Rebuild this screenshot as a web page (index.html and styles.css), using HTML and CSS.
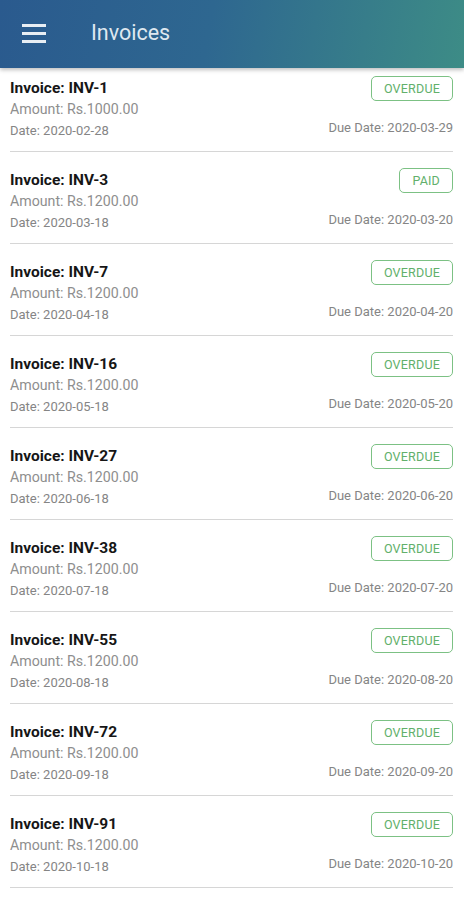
FILE: index.html
```html
<!DOCTYPE html>
<html lang="en">
<head>
    <meta charset="UTF-8">
    <meta name="viewport" content="width=device-width, initial-scale=1.0">
    <title>Invoices</title>
    <link rel="stylesheet" href="styles.css">
</head>
<body>

<header class="app-bar">
    <div class="menu-icon">
        <span></span>
        <span></span>
        <span></span>
    </div>
    <h1>Invoices</h1>
</header>

<ul class="invoice-list">
    <li class="invoice">
        <div class="info">
            <div class="number">Invoice: INV-1</div>
            <div class="amount">Amount: Rs.1000.00</div>
            <div class="date">Date: 2020-02-28</div>
        </div>
        <div class="side">
            <span class="status">OVERDUE</span>
            <div class="due">Due Date: 2020-03-29</div>
        </div>
    </li>
    <li class="invoice">
        <div class="info">
            <div class="number">Invoice: INV-3</div>
            <div class="amount">Amount: Rs.1200.00</div>
            <div class="date">Date: 2020-03-18</div>
        </div>
        <div class="side">
            <span class="status">PAID</span>
            <div class="due">Due Date: 2020-03-20</div>
        </div>
    </li>
    <li class="invoice">
        <div class="info">
            <div class="number">Invoice: INV-7</div>
            <div class="amount">Amount: Rs.1200.00</div>
            <div class="date">Date: 2020-04-18</div>
        </div>
        <div class="side">
            <span class="status">OVERDUE</span>
            <div class="due">Due Date: 2020-04-20</div>
        </div>
    </li>
    <li class="invoice">
        <div class="info">
            <div class="number">Invoice: INV-16</div>
            <div class="amount">Amount: Rs.1200.00</div>
            <div class="date">Date: 2020-05-18</div>
        </div>
        <div class="side">
            <span class="status">OVERDUE</span>
            <div class="due">Due Date: 2020-05-20</div>
        </div>
    </li>
    <li class="invoice">
        <div class="info">
            <div class="number">Invoice: INV-27</div>
            <div class="amount">Amount: Rs.1200.00</div>
            <div class="date">Date: 2020-06-18</div>
        </div>
        <div class="side">
            <span class="status">OVERDUE</span>
            <div class="due">Due Date: 2020-06-20</div>
        </div>
    </li>
    <li class="invoice">
        <div class="info">
            <div class="number">Invoice: INV-38</div>
            <div class="amount">Amount: Rs.1200.00</div>
            <div class="date">Date: 2020-07-18</div>
        </div>
        <div class="side">
            <span class="status">OVERDUE</span>
            <div class="due">Due Date: 2020-07-20</div>
        </div>
    </li>
    <li class="invoice">
        <div class="info">
            <div class="number">Invoice: INV-55</div>
            <div class="amount">Amount: Rs.1200.00</div>
            <div class="date">Date: 2020-08-18</div>
        </div>
        <div class="side">
            <span class="status">OVERDUE</span>
            <div class="due">Due Date: 2020-08-20</div>
        </div>
    </li>
    <li class="invoice">
        <div class="info">
            <div class="number">Invoice: INV-72</div>
            <div class="amount">Amount: Rs.1200.00</div>
            <div class="date">Date: 2020-09-18</div>
        </div>
        <div class="side">
            <span class="status">OVERDUE</span>
            <div class="due">Due Date: 2020-09-20</div>
        </div>
    </li>
    <li class="invoice">
        <div class="info">
            <div class="number">Invoice: INV-91</div>
            <div class="amount">Amount: Rs.1200.00</div>
            <div class="date">Date: 2020-10-18</div>
        </div>
        <div class="side">
            <span class="status">OVERDUE</span>
            <div class="due">Due Date: 2020-10-20</div>
        </div>
    </li>
</ul>

</body>
</html>
```

FILE: styles.css
```css
body {
    margin: 0;
    padding: 0;
    font-family: Roboto, 'Noto Sans', sans-serif;
    background-color: #fff;
    color: #1a1a1a;
}

/* Top bar */
.app-bar {
    position: relative;
    z-index: 2;
    height: 68px;
    display: flex;
    align-items: center;
    padding: 0 22px;
    background: linear-gradient(100deg, #2a5a8e 0%, #2e6790 45%, #3d8c86 100%);
    box-shadow: 0 2px 4px rgba(0, 0, 0, 0.25);
}
.menu-icon {
    width: 24px;
    display: flex;
    flex-direction: column;
    gap: 5px;
    margin-top: -2px;
}
.menu-icon span {
    display: block;
    height: 3px;
    background-color: #e8eef4;
}
.app-bar h1 {
    margin: -3px 0 0 45px;
    font-size: 21.5px;
    font-weight: 400;
    color: #dfe8f0;
}

/* Invoice list */
.invoice-list {
    list-style: none;
    margin: 0;
    padding: 0 11px 0 10px;
}
.invoice {
    display: flex;
    justify-content: space-between;
    padding: 18px 0 9px;
    border-bottom: 1px solid #d6d6d6;
}
.invoice:first-child {
    padding-top: 10px;
}
.number {
    font-size: 15.5px;
    font-weight: 700;
    line-height: 21px;
    color: #161616;
}
.amount {
    font-size: 14.2px;
    line-height: 21px;
    color: #8e8e8e;
}
.date {
    font-size: 13px;
    line-height: 22px;
    color: #858585;
}
.side {
    display: flex;
    flex-direction: column;
    justify-content: space-between;
    align-items: flex-end;
}
.status {
    margin-top: -2px;
    padding: 3px 12px;
    font-size: 12.5px;
    line-height: 17px;
    letter-spacing: 0.2px;
    color: #62b06b;
    border: 1.5px solid #7cc184;
    border-radius: 5px;
}
.due {
    font-size: 13px;
    line-height: 22px;
    color: #858585;
    padding-bottom: 3px;
}
```
